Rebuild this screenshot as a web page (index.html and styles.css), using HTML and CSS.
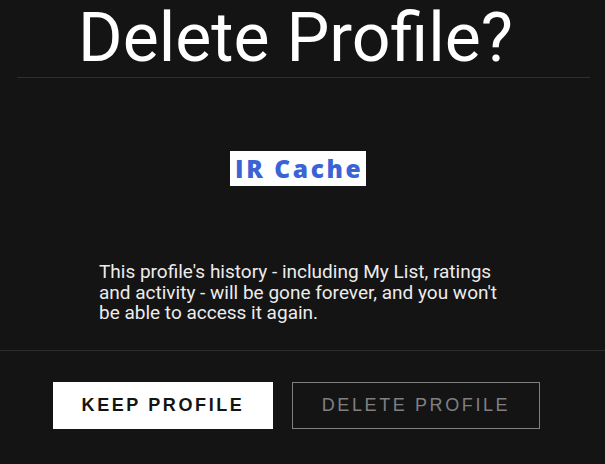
FILE: index.html
```html
<!DOCTYPE html>
<html lang="en">
<head>
    <meta charset="UTF-8">
    <title>Delete Profile?</title>
    <link rel="stylesheet" href="styles.css">
</head>
<body>
    <div class="dialog">
        <h1 class="title">Delete Profile?</h1>
        <div class="title-rule"></div>

        <div class="logo-row">
            <span class="logo">IR Cache</span>
        </div>

        <p class="message">This profile's history - including My List, ratings and activity - will be gone forever, and you won't be able to access it again.</p>

        <div class="actions">
            <button class="btn btn-keep">KEEP PROFILE</button>
            <button class="btn btn-delete">DELETE PROFILE</button>
        </div>
    </div>
</body>
</html>
```

FILE: styles.css
```css
body {
    margin: 0;
    background-color: #141414;
    font-family: Roboto, 'Liberation Sans', Arial, sans-serif;
    color: #fff;
}

.dialog {
    width: 605px;
    height: 464px;
    overflow: hidden;
}

.title {
    margin: 0;
    padding: 0 0 0 78px;
    height: 77px;
    font-size: 68px;
    font-weight: 400;
    line-height: 76px;
    color: #fff;
    white-space: nowrap;
}

.title-rule {
    margin: 0 15px 0 17px;
    border-top: 1px solid #2f2f2f;
}

.logo-row {
    display: flex;
    padding: 73px 0 0 230px;
}

.logo {
    background: #fff;
    color: #3a63d6;
    font-family: 'Open Sans', sans-serif;
    font-weight: 800;
    font-size: 24.5px;
    line-height: 35px;
    padding: 0 3px 0 5px;
    letter-spacing: 2.6px;
}

.message {
    margin: 0;
    padding: 76px 90px 0 99px;
    height: 88px;
    font-size: 19px;
    line-height: 20.7px;
    color: #ececec;
    border-bottom: 1px solid #2c2c2c;
}

.actions {
    display: flex;
    gap: 19px;
    padding: 31px 0 0 53px;
}

.btn {
    height: 47px;
    font-family: 'Liberation Sans', Arial, sans-serif;
    font-size: 18px;
    letter-spacing: 2.6px;
    text-transform: uppercase;
    cursor: pointer;
}

.btn-keep {
    width: 220px;
    background: #fff;
    color: #141414;
    border: none;
    font-weight: 700;
}

.btn-delete {
    width: 248px;
    background: transparent;
    color: #808080;
    border: 1px solid #808080;
}
```
